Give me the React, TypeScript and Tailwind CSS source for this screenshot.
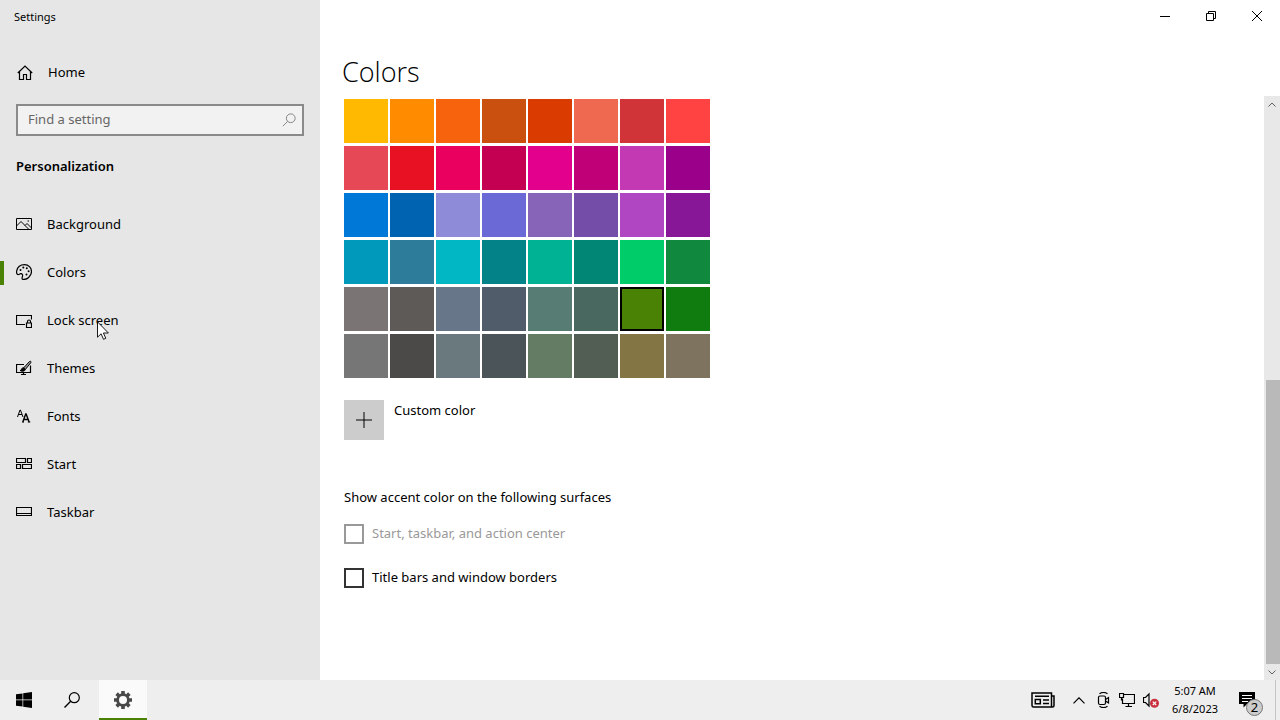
import { useState, type ReactNode } from "react";

const swatches: { name: string; bg: string }[] = [
  { name: "Yellow gold", bg: "bg-[#ffb900]" },
  { name: "Gold", bg: "bg-[#ff8c00]" },
  { name: "Orange bright", bg: "bg-[#f7630c]" },
  { name: "Orange dark", bg: "bg-[#ca5010]" },
  { name: "Rust", bg: "bg-[#da3b01]" },
  { name: "Pale rust", bg: "bg-[#ef6950]" },
  { name: "Brick red", bg: "bg-[#d13438]" },
  { name: "Mod red", bg: "bg-[#ff4343]" },
  { name: "Pale red", bg: "bg-[#e74856]" },
  { name: "Red", bg: "bg-[#e81123]" },
  { name: "Rose bright", bg: "bg-[#ea005e]" },
  { name: "Rose", bg: "bg-[#c30052]" },
  { name: "Plum light", bg: "bg-[#e3008c]" },
  { name: "Plum", bg: "bg-[#bf0077]" },
  { name: "Orchid light", bg: "bg-[#c239b3]" },
  { name: "Orchid", bg: "bg-[#9a0089]" },
  { name: "Default blue", bg: "bg-[#0078d7]" },
  { name: "Navy blue", bg: "bg-[#0063b1]" },
  { name: "Purple shadow", bg: "bg-[#8e8cd8]" },
  { name: "Purple shadow dark", bg: "bg-[#6b69d6]" },
  { name: "Iris pastel", bg: "bg-[#8764b8]" },
  { name: "Iris spring", bg: "bg-[#744da9]" },
  { name: "Violet red light", bg: "bg-[#b146c2]" },
  { name: "Violet red", bg: "bg-[#881798]" },
  { name: "Cool blue bright", bg: "bg-[#0099bc]" },
  { name: "Cool blue", bg: "bg-[#2d7d9a]" },
  { name: "Seafoam", bg: "bg-[#00b7c3]" },
  { name: "Seafoam teal", bg: "bg-[#038387]" },
  { name: "Mint light", bg: "bg-[#00b294]" },
  { name: "Mint dark", bg: "bg-[#018574]" },
  { name: "Turf green", bg: "bg-[#00cc6a]" },
  { name: "Sport green", bg: "bg-[#10893e]" },
  { name: "Gray", bg: "bg-[#7a7574]" },
  { name: "Gray brown", bg: "bg-[#5d5a58]" },
  { name: "Steel blue", bg: "bg-[#68768a]" },
  { name: "Metal blue", bg: "bg-[#515c6b]" },
  { name: "Pale moss", bg: "bg-[#567c73]" },
  { name: "Moss", bg: "bg-[#486860]" },
  { name: "Meadow green", bg: "bg-[#498205]" },
  { name: "Green", bg: "bg-[#107c10]" },
  { name: "Overcast", bg: "bg-[#767676]" },
  { name: "Storm", bg: "bg-[#4c4a48]" },
  { name: "Blue gray", bg: "bg-[#69797e]" },
  { name: "Gray dark", bg: "bg-[#4a5459]" },
  { name: "Liddy green", bg: "bg-[#647c64]" },
  { name: "Sage", bg: "bg-[#525e54]" },
  { name: "Camouflage desert", bg: "bg-[#847545]" },
  { name: "Camouflage", bg: "bg-[#7e735f]" },
];

function Icon({ children, className = "size-4" }: { children: ReactNode; className?: string }) {
  return (
    <svg viewBox="0 0 16 16" fill="none" stroke="currentColor" className={`shrink-0 ${className}`} aria-hidden="true">
      {children}
    </svg>
  );
}

const navItems: { label: string; icon: ReactNode }[] = [
  {
    label: "Background",
    icon: (
      <Icon>
        <path d="M.5 2.500h15v11H.5z" />
        <path d="M.5 10 5 5.500l7.500 7.500M9 9.500l2-2 4.500 4.500" />
        <path d="M11.500 5h1.500" />
      </Icon>
    ),
  },
  {
    label: "Colors",
    icon: (
      <Icon>
        <path d="M6.500 15.300c-1-.5-.3-2 0-3 .4-1.500-.3-2.800-1.800-2.600-1.200.2-2 1.300-3 .8C.6 9.900.4 8.300.7 6.900 1.500 3 4.800.6 8.500.6c4 0 7 3 7 6.900 0 4.600-4.600 8.800-9 7.800Z" strokeWidth="1.200" />
        <g fill="currentColor" stroke="none">
          <circle cx="4.500" cy="6" r="1" />
          <circle cx="7.300" cy="3.600" r="1" />
          <circle cx="10.800" cy="4.200" r="1" />
          <circle cx="12.600" cy="7.300" r="1" />
          <circle cx="10.500" cy="10.500" r="1" />
        </g>
      </Icon>
    ),
  },
  {
    label: "Lock screen",
    icon: (
      <Icon>
        <path d="M9 12.500H.5v-9h15v4" strokeWidth="1.200" />
        <path d="M10.500 11h5v4.500h-5zM11.500 11v-1.500a1.500 1.500 0 0 1 3 0V11" strokeWidth="1.200" />
      </Icon>
    ),
  },
  {
    label: "Themes",
    icon: (
      <Icon>
        <path d="M8 4.500H.5v8h14v-7M7.500 12.500v2.500M5 14.500h5" strokeWidth="1.200" />
        <path d="m7.500 8 6-6.500c.9-.8 2 .2 1.300 1.200L9.300 9.500z" fill="#999" />
        <path d="M7.500 8c-1.500-.3-2 .8-2.200 1.700-.1.500-.6.800-1.300.8 1.700 1.200 4.800 1 5.300-1Z" fill="currentColor" />
      </Icon>
    ),
  },
  {
    label: "Fonts",
    icon: (
      <Icon>
        <path d="M1.500 9 4 2h.4L7 9M2.500 6.500H6" />
        <path d="M6.800 14 9.700 6h.4l3 8M7.800 11.500H12" strokeWidth="1.400" />
        <path d="M6 14h2M11.800 14h2.500" />
      </Icon>
    ),
  },
  {
    label: "Start",
    icon: (
      <Icon>
        <path d="M.5 2.500h9v4h-9zM11.500 2.500h4v4h-4zM.5 8.500h4v4h-4zM6.500 8.500h9v4h-9z" strokeWidth="1.200" />
      </Icon>
    ),
  },
  {
    label: "Taskbar",
    icon: (
      <Icon>
        <path d="M.5 3.500h15v8H.5zM.5 9.500h15" strokeWidth="1.200" />
      </Icon>
    ),
  },
];

function Sidebar() {
  const [active, setActive] = useState("Colors");

  return (
    <aside className="relative w-80 shrink-0 bg-[#e6e6e6]">
      <div className="flex h-[34px] items-center px-3.5 text-[11px]">Settings</div>

      <a href="#home" className="mt-3.5 flex h-[50px] items-center gap-[15px] px-4">
        <Icon className="ml-px size-4">
          <path d="M.8 8 8 1l7.200 7M2.500 6.500v8h4v-5h3v5h4v-8" strokeWidth="1.200" />
        </Icon>
        Home
      </a>

      <div className="mx-4 mt-1.5 flex h-8 items-center border-2 border-[#8a8a8a] bg-[#f2f2f2] pr-1.5 pl-2.5">
        <input
          type="text"
          aria-label="Find a setting"
          placeholder="Find a setting"
          className="min-w-0 flex-1 bg-transparent outline-none placeholder:text-[#666]"
        />
        <Icon className="size-3.5 text-[#777]">
          <circle cx="10" cy="6" r="5" />
          <path d="M6.500 9.500 1 15" />
        </Icon>
      </div>

      <h2 className="mt-[18px] h-6 px-4 leading-6 font-semibold">Personalization</h2>

      <nav className="mt-[23px]">
        {navItems.map(({ label, icon }) => (
          <a
            key={label}
            href={`#${label}`}
            onClick={() => setActive(label)}
            className="flex h-12 items-center"
          >
            <span className={`h-6 w-1 ${active === label ? "bg-[#498205]" : "bg-transparent"}`} />
            <span className="ml-3 pb-0.5">{icon}</span>
            <span className="ml-[15px]">{label}</span>
          </a>
        ))}
      </nav>

      {/* Mouse pointer */}
      <svg viewBox="0 0 12 19" className="pointer-events-none absolute top-[321px] left-[97px] h-[19px] w-3" aria-hidden="true">
        <path d="M.5.800v15.400l3.600-3.400 2.400 5.500 2.300-1-2.400-5.300h5z" fill="#fff" stroke="#000" strokeWidth=".9" />
      </svg>
    </aside>
  );
}

function WindowControls() {
  return (
    <div className="flex h-8 justify-end">
      <button aria-label="Minimize" className="flex w-[46px] items-center justify-center">
        <svg viewBox="0 0 10 10" className="size-2.5" stroke="currentColor"><path d="M0 5.500h10" /></svg>
      </button>
      <button aria-label="Restore" className="flex w-[46px] items-center justify-center">
        <svg viewBox="0 0 10 10" className="size-2.5" fill="none" stroke="currentColor">
          <path d="M.5 2.500h7v7h-7zM2.500 2.500v-2h7v7h-2" />
        </svg>
      </button>
      <button aria-label="Close" className="flex w-[46px] items-center justify-center">
        <svg viewBox="0 0 10 10" className="size-2.5" stroke="currentColor"><path d="m0 0 10 10M10 0 0 10" /></svg>
      </button>
    </div>
  );
}

function ColorsPage() {
  const [accent, setAccent] = useState("Meadow green");

  return (
    <div className="px-6">
      <h1 className="-ml-0.5 h-10 font-['Open_Sans',sans-serif] text-[27px] leading-10 font-light">Colors</h1>

      <div className="mt-[7px] grid w-fit grid-cols-8 gap-x-0.5 gap-y-[3px]">
        {swatches.map(({ name, bg }) => (
          <button
            key={name}
            aria-label={name}
            aria-pressed={accent === name}
            onClick={() => setAccent(name)}
            className={`size-11 ${bg} ${accent === name ? "border-2 border-black" : ""}`}
          />
        ))}
      </div>

      <div className="mt-[22px] flex gap-2.5">
        <button id="custom-color" className="flex size-10 items-center justify-center bg-[#ccc]">
          <Icon>
            <path d="M8 0v16M0 8h16" />
          </Icon>
        </button>
        <label htmlFor="custom-color" className="leading-5">Custom color</label>
      </div>

      <h3 className="mt-[47px] leading-5">Show accent color on the following surfaces</h3>

      <label className="mt-[17px] flex h-5 items-center gap-2 text-[#999]">
        <input type="checkbox" disabled className="size-5 appearance-none border-2 border-[#999] bg-white" />
        Start, taskbar, and action center
      </label>
      <label className="mt-6 flex h-5 items-center gap-2">
        <input type="checkbox" className="size-5 appearance-none border-2 border-[#333] bg-white checked:bg-[#498205]" />
        Title bars and window borders
      </label>
    </div>
  );
}

function ScrollBar() {
  return (
    <div className="flex w-4 shrink-0 flex-col bg-[#e8e8e8] text-[#606060]">
      <button aria-label="Scroll up" className="flex h-4 items-center justify-center">
        <svg viewBox="0 0 8 5" className="h-[5px] w-2" fill="none" stroke="currentColor"><path d="m.5 4.500 3.500-3.500 3.500 3.500" /></svg>
      </button>
      <div className="flex flex-1 flex-col justify-end pl-0.5">
        <div className="h-[51.5%] bg-[#b9b9b9]" />
      </div>
      <button aria-label="Scroll down" className="flex h-4 items-center justify-center">
        <svg viewBox="0 0 8 5" className="h-[5px] w-2" fill="none" stroke="currentColor"><path d="m.5.500 3.500 3.500 3.500-3.500" /></svg>
      </button>
    </div>
  );
}

function Taskbar() {
  return (
    <footer className="flex h-10 shrink-0 items-stretch bg-[#eee]">
      <button aria-label="Start" className="flex w-12 items-center justify-center">
        <svg viewBox="0 0 16 16" className="size-4" fill="#000">
          <path d="M0 2.300 6.500 1.400v6.200H0zM7.200 1.300 16 0v7.600H7.200zM0 8.300h6.500v6.300L0 13.700zM7.200 8.300H16V16l-8.800-1.200z" />
        </svg>
      </button>
      <button aria-label="Search" className="flex w-12 items-center justify-center">
        <Icon>
          <circle cx="10.300" cy="5.700" r="5" strokeWidth="1.200" />
          <path d="M6.700 9.300.500 15.500" strokeWidth="1.400" />
        </Icon>
      </button>
      <button aria-label="Settings" className="ml-[3px] flex w-12 items-center justify-center border-b-2 border-[#498205] bg-[#fafafa] pt-0.5">
        <svg viewBox="0 0 18 18" className="size-[18px]" fill="none" stroke="#484848" aria-hidden="true">
          <circle cx="9" cy="9" r="5.400" strokeWidth="2.800" />
          <path
            d="M9 0v3M9 15v3M0 9h3M15 9h3M2.640 2.640l2.120 2.120M13.240 13.240l2.120 2.120M2.640 15.360l2.120-2.120M13.240 4.760l2.120-2.120"
            strokeWidth="3.600"
          />
        </svg>
      </button>

      <div className="ml-auto flex items-center">
        <button aria-label="News and interests" className="mr-3">
          <svg viewBox="0 0 24 16" className="h-4 w-6" fill="none" stroke="#000" strokeWidth="1.500">
            <path d="M20.500 14.800V1H1v12.500c0 1 .6 1.500 1.500 1.500h19c1 0 1.500-.5 1.500-1.500V4h-2.500" />
            <path d="M4 4.300h14M12 8h6M12 11.500h6" />
            <path d="M4.300 7.500h5v4.200h-5z" />
          </svg>
        </button>
        <button aria-label="Show hidden icons" className="flex w-6 justify-center">
          <svg viewBox="0 0 12 7" className="h-[7px] w-3" fill="none" stroke="#000" strokeWidth="1.200"><path d="m.5 6.300 5.500-5.500 5.500 5.500" /></svg>
        </button>
        <button aria-label="Meet Now" className="flex w-6 justify-center">
          <Icon>
            <rect x="3.500" y="4" width="7" height="8.500" rx="1.500" strokeWidth="1.200" />
            <path d="m10.500 7.500 3-2v5.500l-3-2M4.500 1.800q4-2.800 8 0M4.500 14.200q4 2.800 8 0" strokeWidth="1.200" />
          </Icon>
        </button>
        <button aria-label="Network" className="flex w-6 justify-center">
          <Icon>
            <path d="M4.500 2.500h11v9h-12V6.500M9.500 11.500v3M6.500 14.500h6.500" strokeWidth="1.200" />
            <path d="M.5 1.500h4v4h-4zM2.500 5.500v3" strokeWidth="1.200" />
          </Icon>
        </button>
        <button aria-label="Volume muted" className="flex w-6 justify-center">
          <Icon>
            <path d="M.5 5.500h2l3.500-3.500v12l-3.500-3.500h-2z" strokeWidth="1.200" />
            <circle cx="11.500" cy="11.300" r="4.500" fill="#c9303e" stroke="none" />
            <path d="m9.800 9.600 3.400 3.400m0-3.400-3.400 3.400" stroke="#fff" strokeWidth="1.200" />
          </Icon>
        </button>
        <button className="w-16 text-center text-[11px] leading-[18px]">
          5:07 AM
          <br />
          6/8/2023
        </button>
        <button aria-label="Notifications, 2 new" className="relative flex h-10 w-10 items-center justify-center">
          <svg viewBox="0 0 16 16" className="size-4" aria-hidden="true">
            <path d="M0 0h16v12H8l-3.500 3.500V12H0z" fill="#000" />
            <path d="M3 3.500h10M3 6.500h10M3 9.500h6" stroke="#fff" />
          </svg>
          <span className="absolute top-[19px] left-[19px] flex size-[17px] items-center justify-center rounded-full border border-[#777] bg-[#ccc] text-[13px] leading-none">
            2
          </span>
        </button>
        <button aria-label="Show desktop" className="ml-2 h-10 w-[5px] border-l border-[#c4c4c4]" />
      </div>
    </footer>
  );
}

export default function App() {
  return (
    <div className="flex min-h-screen flex-col bg-white font-['Noto_Sans','Open_Sans',sans-serif] text-[13px] text-black">
      <div className="flex flex-1">
        <Sidebar />
        <main className="flex min-w-0 flex-1 flex-col">
          <WindowControls />
          <div className="flex flex-1">
            <div className="flex-1 pt-5">
              <ColorsPage />
            </div>
            <div className="mt-16 flex">
              <ScrollBar />
            </div>
          </div>
        </main>
      </div>
      <Taskbar />
    </div>
  );
}
